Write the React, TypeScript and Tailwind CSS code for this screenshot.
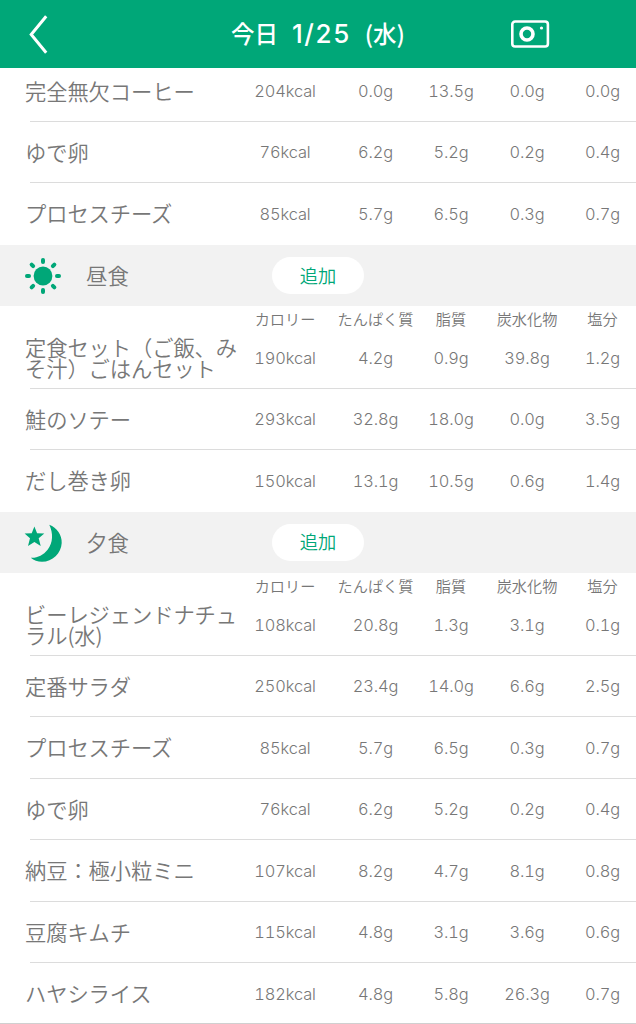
type Food = {
  name: string
  values: string[]
}

const columns = ['カロリー', 'たんぱく質', '脂質', '炭水化物', '塩分']

const breakfast: Food[] = [
  { name: '完全無欠コーヒー', values: ['204kcal', '0.0g', '13.5g', '0.0g', '0.0g'] },
  { name: 'ゆで卵', values: ['76kcal', '6.2g', '5.2g', '0.2g', '0.4g'] },
  { name: 'プロセスチーズ', values: ['85kcal', '5.7g', '6.5g', '0.3g', '0.7g'] },
]

const lunch: Food[] = [
  { name: '定食セット（ご飯、みそ汁）ごはんセット', values: ['190kcal', '4.2g', '0.9g', '39.8g', '1.2g'] },
  { name: '鮭のソテー', values: ['293kcal', '32.8g', '18.0g', '0.0g', '3.5g'] },
  { name: 'だし巻き卵', values: ['150kcal', '13.1g', '10.5g', '0.6g', '1.4g'] },
]

const dinner: Food[] = [
  { name: 'ビーレジェンドナチュラル(水)', values: ['108kcal', '20.8g', '1.3g', '3.1g', '0.1g'] },
  { name: '定番サラダ', values: ['250kcal', '23.4g', '14.0g', '6.6g', '2.5g'] },
  { name: 'プロセスチーズ', values: ['85kcal', '5.7g', '6.5g', '0.3g', '0.7g'] },
  { name: 'ゆで卵', values: ['76kcal', '6.2g', '5.2g', '0.2g', '0.4g'] },
  { name: '納豆：極小粒ミニ', values: ['107kcal', '8.2g', '4.7g', '8.1g', '0.8g'] },
  { name: '豆腐キムチ', values: ['115kcal', '4.8g', '3.1g', '3.6g', '0.6g'] },
  { name: 'ハヤシライス', values: ['182kcal', '4.8g', '5.8g', '26.3g', '0.7g'] },
]

const grid = 'grid grid-cols-[213px_94px_87px_64px_88px_63px] pl-[25px]'

function SunIcon() {
  return (
    <svg width="38" height="38" viewBox="0 0 38 38" fill="#00a778">
      <circle cx="19" cy="19" r="9.4" />
      {[0, 45, 90, 135, 180, 225, 270, 315].map((a) => (
        <rect key={a} x="17" y="1" width="4" height="6" rx="1.9" transform={`rotate(${a} 19 19)`} />
      ))}
    </svg>
  )
}

function MoonIcon() {
  return (
    <svg width="38" height="38" viewBox="0 0 38 38" fill="#00a778">
      <path d="M25.3 0.8C33 4 38 11 37.7 19C37.2 29.5 28.5 37.8 18 37.8C13.7 37.8 9.8 36.4 6.8 33.8C13 34.3 19.2 31.2 23.6 25.8C29.2 18.8 29.3 9.2 25.3 0.8Z" />
      <path d="M10.4 2.4L13.1 9.2L20.3 9.5L14.7 14.2L16.7 22L10.4 18L4 22L6 14.2L0.6 9.5L7.7 9.2Z" />
    </svg>
  )
}

function CameraIcon() {
  return (
    <svg width="40" height="28" viewBox="0 0 40 28" fill="none" stroke="#fff">
      <rect x="2.3" y="1.5" width="35.6" height="25" rx="2.8" strokeWidth="2.6" />
      <circle cx="17" cy="14" r="6" strokeWidth="3.6" />
      <circle cx="31.5" cy="8" r="1.6" fill="#fff" stroke="none" />
    </svg>
  )
}

function FoodRow({ food, last, short }: { food: Food; last: boolean; short?: boolean }) {
  return (
    <div className={`relative ${grid} items-center ${short ? 'h-[54px] pb-[7px]' : 'h-[61.47px]'}`}>
      <div className="text-[21.3px] leading-[21.5px] w-[216px] pb-[2px] tracking-[-0.1px]">{food.name}</div>
      {food.values.map((v, i) => (
        <div key={i} className="text-center text-[16.4px] font-light tabular-nums tracking-[-0.1px] font-['Inter','Noto_Sans_CJK_JP',sans-serif]">{v}</div>
      ))}
      {!last && <div className="absolute bottom-0 left-[30px] right-0 h-px bg-[#dcdcdc]" />}
    </div>
  )
}

function Section({ title, icon, foods }: { title: string; icon: React.ReactNode; foods: Food[] }) {
  return (
    <section>
      <div className="flex items-center h-[61.47px] bg-[#f2f2f2] pl-[24px]">
        {icon}
        <h2 className="w-[210px] pl-[24px] pb-[2px] text-[21.4px] leading-none">{title}</h2>
        <button className="w-[92px] h-[37px] pb-[2px] rounded-full bg-white text-[18.3px] leading-none text-[#00a778]">追加</button>
      </div>
      <div className={`${grid} h-[21px]`}>
        <span />
        {columns.map((c) => (
          <div key={c} className="pt-[2px] text-center text-[15.2px] leading-[21px] whitespace-nowrap">{c}</div>
        ))}
      </div>
      {foods.map((f, i) => (
        <FoodRow key={i} food={f} last={i === foods.length - 1} />
      ))}
    </section>
  )
}

export default function App() {
  return (
    <div lang="ja" className="w-[636px] h-[1024px] overflow-hidden relative bg-white font-[350] text-[#777] font-['Noto_Sans_CJK_JP',sans-serif]">
      <header className="grid grid-cols-[1fr_174px_1fr] items-center h-[68px] bg-[#00a778] text-white">
        <svg className="ml-[28px]" width="21" height="39" viewBox="0 0 21 39" fill="none" stroke="#fff" strokeWidth="3">
          <path d="M18.2 1.2L3.2 19.5L18.2 37.8" />
        </svg>
        <h1 className="flex items-center justify-between text-[23.5px] font-medium leading-none whitespace-nowrap">
          <span>今日</span>
          <span className="text-[26px] tracking-[1.6px] font-['Inter',sans-serif]">1/25</span>
          <span>(水)</span>
        </h1>
        <div className="pl-[105px]"><CameraIcon /></div>
      </header>
      <main>
        {breakfast.map((f, i) => (
          <FoodRow key={i} food={f} last={i === breakfast.length - 1} short={i === 0} />
        ))}
        <Section title="昼食" icon={<SunIcon />} foods={lunch} />
        <Section title="夕食" icon={<MoonIcon />} foods={dinner} />
      </main>
      <div className="absolute bottom-0 inset-x-0 h-px bg-[#d0d0d0]" />
    </div>
  )
}
